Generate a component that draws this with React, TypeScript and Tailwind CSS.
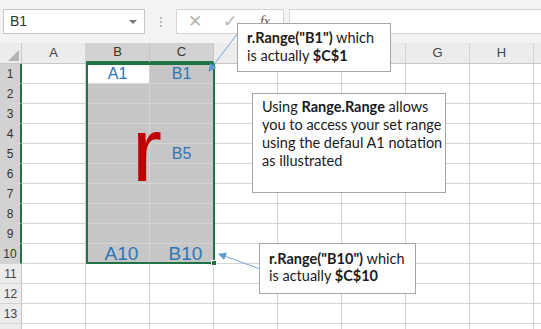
import { Fragment } from "react";

const COLS = ["A", "B", "C", "D", "E", "F", "G", "H"];
// D..F headers sit under the first callout, so their labels never show
const HIDDEN_HEADERS = ["D", "E", "F"];
const ROWS = Array.from({ length: 14 }, (_, i) => i + 1);
const SEL_COLS = ["B", "C"];

const cellText: Record<string, { text: string; big?: boolean }> = {
  B1: { text: "A1" },
  C1: { text: "B1" },
  C5: { text: "B5" },
  B10: { text: "A10", big: true },
  C10: { text: "B10", big: true },
};

function isSelected(col: string, row: number) {
  return SEL_COLS.includes(col) && row >= 1 && row <= 10;
}

function FormulaBar() {
  return (
    <div className="h-[43px] bg-[#f3f3f3] flex items-start pt-[9px] pl-[3px]">
      <div className="w-[142px] h-[25px] bg-white border border-[#c6c6c6] flex items-center justify-between px-[6px]">
        <span className="text-[14px] text-[#333]">B1</span>
        <span className="w-0 h-0 border-l-[4px] border-r-[4px] border-t-[4px] border-l-transparent border-r-transparent border-t-[#7a7a7a] mr-[1px]" />
      </div>
      <div className="w-[31px] h-[25px] flex flex-col items-center justify-center gap-[2px]">
        <span className="w-[2px] h-[2px] bg-[#b8b8b8]" />
        <span className="w-[2px] h-[2px] bg-[#b8b8b8]" />
        <span className="w-[2px] h-[2px] bg-[#b8b8b8]" />
      </div>
      <div className="w-[108px] h-[25px] bg-white border border-[#d4d4d4] flex items-center text-[#b3b3b3]">
        <span className="w-[36px] text-center text-[17px] leading-none">✕</span>
        <span className="w-[34px] text-center text-[17px] leading-none">✓</span>
        <span className="w-[36px] text-center italic text-[#555] text-[14px] font-['Liberation_Serif',serif]">fx</span>
      </div>
      <div className="ml-[5px] flex-1 h-[25px] bg-white border-y border-l border-[#d4d4d4]" />
    </div>
  );
}

function Grid() {
  return (
    <div className="relative">
      {/* column headers */}
      <div className="flex h-[21px] bg-[#ececec] border-b border-[#c6c6c6]">
        <div className="w-[22px] border-r border-[#c6c6c6] flex items-end justify-end pb-[2px] pr-[2px]">
          <svg width="11" height="11" viewBox="0 0 11 11">
            <path d="M11 0 L11 11 L0 11 Z" fill="#b4b4b4" />
          </svg>
        </div>
        {COLS.map((c) => (
          <div
            key={c}
            className={
              "w-[64px] flex items-center justify-center text-[13px] border-r " +
              (SEL_COLS.includes(c)
                ? "bg-[#d2d2d2] text-[#333] border-[#c6c6c6] border-b-2 border-b-[#217346]"
                : "text-[#444] border-[#d4d4d4]")
            }
          >
            {HIDDEN_HEADERS.includes(c) ? "" : c}
          </div>
        ))}
        <div className="flex-1" />
      </div>

      {ROWS.map((r) => {
        const rowSel = r <= 10;
        return (
          <div key={r} className="flex h-[20px]">
            <div
              className={
                "w-[22px] flex items-center justify-center text-[12px] border-b border-[#d4d4d4] " +
                (rowSel
                  ? "bg-[#d2d2d2] text-[#333] border-r-2 border-r-[#217346]"
                  : "bg-[#ececec] text-[#444] border-r border-r-[#c6c6c6]")
              }
            >
              {r < 14 ? r : ""}
            </div>
            {COLS.map((c) => {
              const key = `${c}${r}`;
              const content = cellText[key];
              const shaded = isSelected(c, r) && key !== "B1";
              return (
                <Fragment key={key}>
                  <div
                    className={
                      "w-[64px] border-r border-b border-[#d4d4d4] flex items-center justify-center overflow-visible text-[#2e75b6] " +
                      (shaded ? "bg-[#c6c6c6] border-[#b4b4b4] " : "bg-white ") +
                      (content?.big ? "text-[19px] pt-[2px] pl-[8px]" : "text-[16px]")
                    }
                  >
                    {content?.text}
                  </div>
                </Fragment>
              );
            })}
            <div className="flex-1 border-b border-[#d4d4d4]" />
          </div>
        );
      })}

      {/* selection border + fill handle */}
      <div className="absolute left-[86px] top-[20px] w-[129px] h-[201px] border-2 border-[#217346] pointer-events-none">
        <span className="absolute -right-[4px] -bottom-[4px] w-[6px] h-[6px] bg-[#217346] border border-white" />
      </div>

      <div className="absolute left-[132px] top-[62px] text-[90px] leading-none text-[#c00000]">
        r
      </div>
    </div>
  );
}

function Callout({
  className,
  children,
}: {
  className: string;
  children: React.ReactNode;
}) {
  return (
    <div
      className={
        "absolute bg-white border border-[#a6a6a6] text-[#1a1a1a] font-['Lato',sans-serif] text-[14.5px] whitespace-nowrap " +
        className
      }
    >
      {children}
    </div>
  );
}

export default function App() {
  return (
    <div className="relative w-[541px] h-[329px] overflow-hidden bg-white font-['Liberation_Sans',sans-serif]">
      <FormulaBar />
      <Grid />

      <svg className="absolute inset-0 pointer-events-none" width="541" height="329">
        <defs>
          <marker id="arr" markerWidth="8" markerHeight="8" refX="7" refY="4" orient="auto">
            <path d="M0,0 L8,4 L0,8 Z" fill="#5b9bd5" />
          </marker>
        </defs>
        <line x1="238" y1="33" x2="209" y2="71" stroke="#7aa6d6" strokeWidth="1" markerEnd="url(#arr)" />
        <line x1="260" y1="269" x2="219" y2="254" stroke="#7aa6d6" strokeWidth="1" markerEnd="url(#arr)" />
      </svg>

      <Callout className="left-[237px] top-[23px] w-[154px] h-[49px] pl-[9px] pt-[5px] leading-[18px]">
        <div>
          <b>r.Range("B1")</b> which
        </div>
        <div>
          is actually <b>$C$1</b>
        </div>
      </Callout>

      <Callout className="left-[252px] top-[93px] w-[194px] h-[100px] pl-[9px] pt-[4px] leading-[18px]">
        <div>
          Using <b>Range.Range</b> allows
        </div>
        <div>you to access your set range</div>
        <div>using the defaul A1 notation</div>
        <div>as illustrated</div>
      </Callout>

      <Callout className="left-[259px] top-[243px] w-[157px] h-[51px] pl-[9px] pt-[6px] leading-[17px]">
        <div>
          <b>r.Range("B10")</b> which
        </div>
        <div>
          is actually <b>$C$10</b>
        </div>
      </Callout>
    </div>
  );
}
